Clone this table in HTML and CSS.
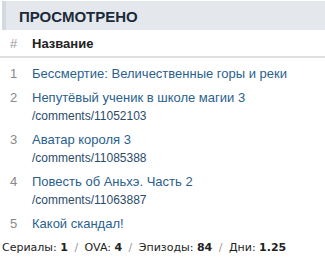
FILE: index.html
```html
<!DOCTYPE html>
<html lang="ru">
     <head>
          <meta charset="UTF-8" />
          <title>Просмотрено</title>
          <link rel="stylesheet" href="styles.css">
     </head>
     <body>
          <div class="block">
               <h2 class="block-title">ПРОСМОТРЕНО</h2>

               <table class="watched">
                    <thead>
                         <tr>
                              <th class="num">#</th>
                              <th>Название</th>
                         </tr>
                    </thead>
                    <tbody>
                         <tr>
                              <td class="num">1</td>
                              <td><a href="#">Бессмертие: Величественные горы и реки</a></td>
                         </tr>
                         <tr>
                              <td class="num">2</td>
                              <td>
                                   <a href="#">Непутёвый ученик в школе магии 3</a>
                                   <div class="path">/comments/11052103</div>
                              </td>
                         </tr>
                         <tr>
                              <td class="num">3</td>
                              <td>
                                   <a href="#">Аватар короля 3</a>
                                   <div class="path">/comments/11085388</div>
                              </td>
                         </tr>
                         <tr>
                              <td class="num">4</td>
                              <td>
                                   <a href="#">Повесть об Аньхэ. Часть 2</a>
                                   <div class="path">/comments/11063887</div>
                              </td>
                         </tr>
                         <tr>
                              <td class="num">5</td>
                              <td><a href="#">Какой скандал!</a></td>
                         </tr>
                    </tbody>
               </table>

               <p class="totals">
                    Сериалы: <b>1</b> <span class="sep">/</span>
                    OVA: <b>4</b> <span class="sep">/</span>
                    Эпизоды: <b>84</b> <span class="sep">/</span>
                    Дни: <b>1.25</b>
               </p>
          </div>
     </body>
</html>
```

FILE: styles.css
```css
* {
     padding: 0;
     margin: 0;
     box-sizing: border-box;
}
body {
     background-color: #fff;
     font-family: "Liberation Sans", Arial, sans-serif;
     color: #222;
     padding-top: 1px;
}
.block-title {
     margin-left: 2px;
     height: 29px;
     padding-left: 13px;
     background-color: #e4e8ed;
     border-left: 4px solid #d3d9e0;
     font-size: 15px;
     font-weight: bold;
     line-height: 31px;
     color: #1b2a3a;
}
.watched {
     width: 100%;
     border-collapse: collapse;
     font-size: 13px;
}
.watched th {
     text-align: left;
     height: 27px;
     padding-top: 1px;
     font-size: 13px;
     color: #222;
     vertical-align: middle;
     border-bottom: 2px solid #e0e0e0;
}
.watched th.num {
     color: #999;
     font-weight: normal;
     vertical-align: middle;
}
.watched .num {
     width: 32px;
     padding-left: 10px;
     vertical-align: top;
     color: #888;
}
.watched td {
     padding-top: 7px;
     padding-bottom: 1px;
     line-height: 16px;
}
.watched tbody tr:first-child td {
     padding-top: 8px;
}
.watched a {
     color: #2b5f8e;
     text-decoration: none;
}
.path {
     margin-top: 2px;
     font-size: 12px;
     color: #2c4b6b;
}
.totals {
     margin-top: 8px;
     padding-left: 2px;
     font-family: "DejaVu Sans", sans-serif;
     font-size: 11px;
     color: #222;
}
.totals b {
     color: #222;
}
.sep {
     color: #999;
     margin: 0 3px;
}
```
